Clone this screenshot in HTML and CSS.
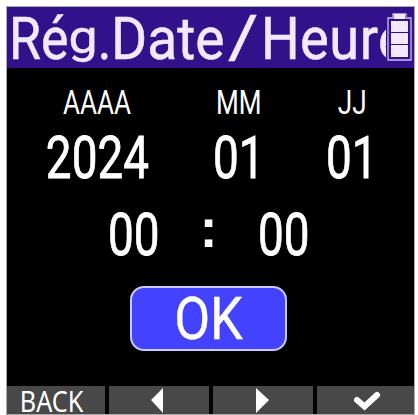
FILE: index.html
```html
<!DOCTYPE html>
<html lang="fr">
<head>
<meta charset="utf-8">
<title>Rég.Date/Heure</title>
<link rel="stylesheet" href="styles.css">
</head>
<body>
<main class="screen">
  <header class="header">
    <h1 class="title"><span class="part reg">Ré<span class="g">g</span>.</span><span class="part date">Date</span><span class="part slash">/</span><span class="part heure">Heure</span></h1>
    <svg class="battery" width="26" height="50" viewBox="0 0 26 50">
      <path d="M6 1H19V5H24V47H1V5H6Z" fill="#32128b" stroke="#cbbdf0" stroke-width="1.3"/>
      <path d="M7 1H18V6H7Z" fill="#f3e9ff"/>
      <path d="M4 8H21V19H4ZM4 20H21V31H4ZM4 32H21V44H4Z" fill="#f3e9ff"/>
    </svg>
  </header>
  <section class="date-fields">
    <div class="field"><span class="label">AAAA</span><span class="digits">2024</span></div>
    <div class="field"><span class="label">MM</span><span class="digits">01</span></div>
    <div class="field"><span class="label">JJ</span><span class="digits">01</span></div>
  </section>
  <section class="time-fields">
    <span class="digits">00</span><span class="colon">:</span><span class="digits">00</span>
  </section>
  <button class="ok"><span>OK</span></button>
  <footer class="softkeys">
    <div class="key"><span class="back">BACK</span></div>
    <div class="key"><svg width="100" height="28" viewBox="0 0 100 28"><path d="M42 14L54 2V27Z" fill="#fff"/></svg></div>
    <div class="key"><svg width="100" height="28" viewBox="0 0 100 28"><path d="M43 2L56 14L43 27Z" fill="#fff"/></svg></div>
    <div class="key"><svg width="97" height="28" viewBox="0 0 97 28"><path d="M40 14L47.500 20.500L60 9" fill="none" stroke="#fff" stroke-width="6" stroke-linecap="round"/></svg></div>
  </footer>
</main>
</body>
</html>
```
FILE: styles.css
```css
* { box-sizing: border-box; }
body {
  margin: 0;
  padding: 7px 4px 1px 7px;
  background: #fff;
  font-family: Roboto, "Liberation Sans", sans-serif;
  color: #fff;
}
.screen {
  width: 407px;
  height: 407px;
  background: #000;
  display: flex;
  flex-direction: column;
  overflow: hidden;
  box-shadow: 0 0 0 1px #aaa;
}
.header {
  position: relative;
  height: 61px;
  flex: none;
  background: #32128b;
}
.title {
  margin: 0;
  display: flex;
  width: 379px;
  height: 61px;
  overflow: hidden;
  padding-left: 2px;
  font-size: 59px;
  font-weight: 400;
  line-height: 64px;
  white-space: nowrap;
  color: #f3e9ff;
  -webkit-text-stroke: .5px #f3e9ff;
}
.part {
  flex: none;
  transform: scaleX(.9);
  transform-origin: left;
}
.reg { width: 101px; transform: scaleX(.88); }
.g {
  display: inline-block;
  transform: scaleY(.78);
  transform-origin: 50% 24px;
}
.date { width: 116px; padding-left: 1px; transform: scaleX(.935); }
.slash { width: 34px; transform: translate(2px, -2px) scaleX(1.25); }
.heure { padding-left: 1px; letter-spacing: .5px; transform: scaleX(.92); }
.battery { position: absolute; right: 1px; top: 6px; }
.date-fields {
  display: grid;
  grid-template-columns: 181px 102px 124px;
  height: 122px;
  flex: none;
}
.field {
  display: flex;
  flex-direction: column;
  align-items: center;
}
.label {
  font-size: 33px;
  line-height: 39px;
  margin-top: 15px;
  transform: scaleX(.79);
}
.digits {
  font-size: 60px;
  font-weight: 400;
  -webkit-text-stroke: .8px #fff;
  line-height: 72px;
  transform: scaleX(.765);
}
.time-fields {
  display: flex;
  height: 86px;
  padding: 9px 97px 0 93px;
  justify-content: space-between;
  flex: none;
}
.colon {
  font: 700 53px/70px "Liberation Sans", sans-serif;
  margin-top: -5px;
}
.ok {
  width: 157px;
  height: 65px;
  margin: 10px 0 0 123px;
  padding: 0;
  flex: none;
  border: 2px solid #c9c9ff;
  border-radius: 14px;
  background: #4343ff;
  color: #fff;
  font: 400 60px/60px Roboto, "Liberation Sans", sans-serif;
  -webkit-text-stroke: .4px #fff;
}
.ok span { display: inline-block; transform: scaleX(.87); }
.softkeys {
  display: grid;
  grid-template-columns: 98px 100px 100px 97px;
  gap: 4px;
  height: 28px;
  margin-top: auto;
}
.key {
  background: #484848;
  display: flex;
  justify-content: center;
}
.back {
  font: 400 29px/29px "Noto Sans", sans-serif;
  margin-left: -8px;
  transform: scaleX(.87);
}
```
